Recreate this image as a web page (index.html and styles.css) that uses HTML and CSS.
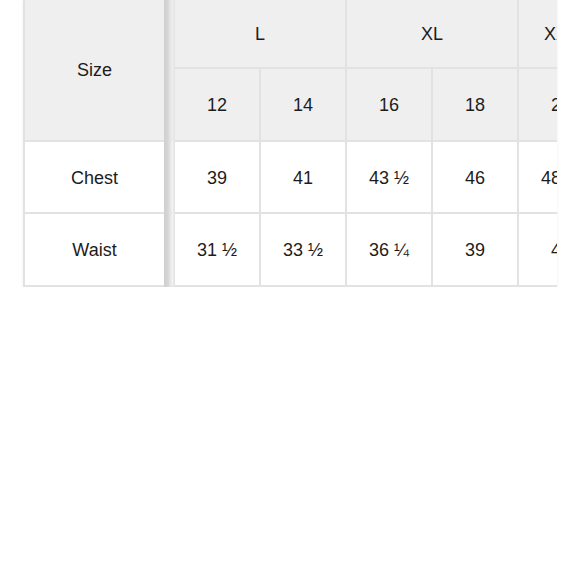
FILE: index.html
```html
<!DOCTYPE html>
<html>
<head>
<meta charset="utf-8">
<link rel="stylesheet" href="styles.css">
</head>
<body>
<div class="page">
  <div class="scroller">
    <div class="grid">
      <div class="cell head sticky size">Size</div>
      <div class="cell head span2">L</div>
      <div class="cell head span2">XL</div>
      <div class="cell head">XXL</div>
      <div class="cell head">12</div>
      <div class="cell head">14</div>
      <div class="cell head">16</div>
      <div class="cell head">18</div>
      <div class="cell head">20</div>
      <div class="cell sticky">Chest</div>
      <div class="cell">39</div>
      <div class="cell">41</div>
      <div class="cell">43 ½</div>
      <div class="cell">46</div>
      <div class="cell">48 ½</div>
      <div class="cell sticky">Waist</div>
      <div class="cell">31 ½</div>
      <div class="cell">33 ½</div>
      <div class="cell">36 ¼</div>
      <div class="cell">39</div>
      <div class="cell">42</div>
    </div>
  </div>
</div>
</body>
</html>
```
FILE: styles.css
```css
html, body {
  margin: 0;
  padding: 0;
  background: #ffffff;
}
.page {
  padding-left: 23px;
}
.scroller {
  width: 534px;
  overflow: hidden;
  box-shadow: 0 1px 3px rgba(0, 0, 0, 0.07);
}
.grid {
  display: grid;
  grid-template-columns: 148px repeat(5, 84px);
  grid-template-rows: 67px 71px 70px 71px;
  gap: 2px;
  padding: 0 0 2px 2px;
  background: #e2e2e2;
  width: max-content;
  font-family: "Liberation Sans", Arial, sans-serif;
  font-size: 18px;
  color: #1c1c1c;
}
.cell {
  background: #ffffff;
  display: flex;
  align-items: center;
  justify-content: center;
  padding-top: 2px;
}
.head {
  background: #efefef;
}
.span2 {
  grid-column: span 2;
}
.size {
  grid-row: span 2;
  padding-top: 0;
}
.sticky {
  position: relative;
  padding-right: 9px;
}
.sticky::after {
  content: "";
  position: absolute;
  top: -2px;
  bottom: -2px;
  right: -2px;
  width: 11px;
  background: linear-gradient(to right, #cfcfcf 0, #d6d6d6 4px, #e4e4e4 6px, rgba(240, 240, 240, 0.6) 9px, rgba(255, 255, 255, 0) 11px);
}
```
